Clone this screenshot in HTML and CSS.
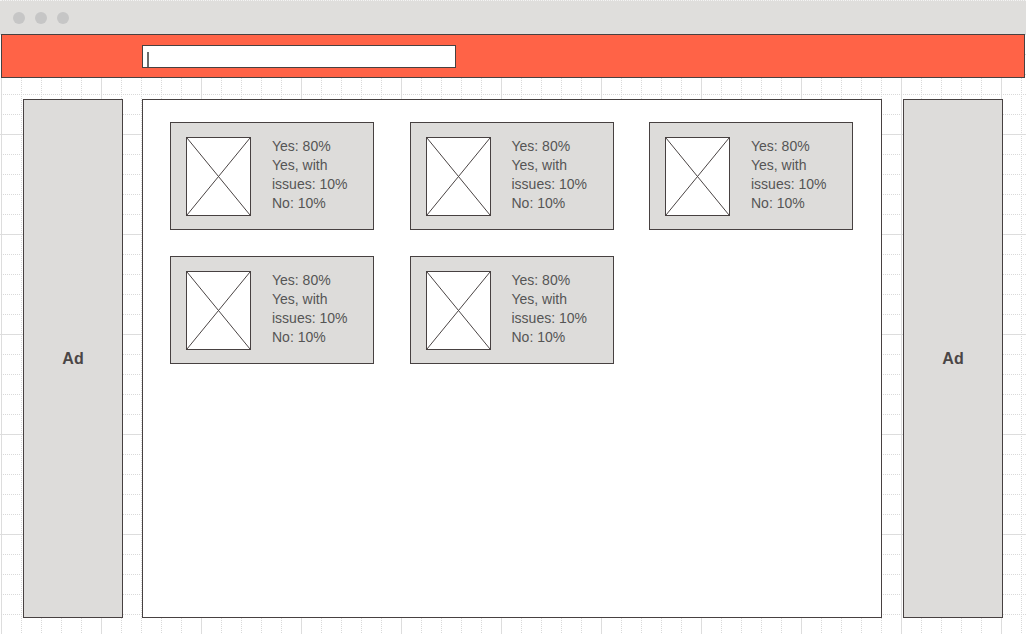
FILE: index.html
```html
<!DOCTYPE html>
<html>
<head>
<meta charset="utf-8">
<title>Poll results</title>
<link rel="stylesheet" href="styles.css">
</head>
<body>
<div class="titlebar">
  <span class="dot"></span><span class="dot"></span><span class="dot"></span>
</div>
<div class="navbar">
  <div class="search"><span class="caret"></span></div>
</div>
<div class="layout">
  <aside class="ad">Ad</aside>
  <main class="content">
    <div class="card">
      <div class="thumb"><svg viewBox="0 0 64 77" preserveAspectRatio="none"><path d="M0 0L64 77M64 0L0 77" stroke="#4a4444" stroke-width="1" fill="none" vector-effect="non-scaling-stroke"/></svg></div>
      <div class="stats"><div>Yes: 80%</div><div>Yes, with issues: 10%</div><div>No: 10%</div></div>
    </div>
    <div class="card">
      <div class="thumb"><svg viewBox="0 0 64 77" preserveAspectRatio="none"><path d="M0 0L64 77M64 0L0 77" stroke="#4a4444" stroke-width="1" fill="none" vector-effect="non-scaling-stroke"/></svg></div>
      <div class="stats"><div>Yes: 80%</div><div>Yes, with issues: 10%</div><div>No: 10%</div></div>
    </div>
    <div class="card">
      <div class="thumb"><svg viewBox="0 0 64 77" preserveAspectRatio="none"><path d="M0 0L64 77M64 0L0 77" stroke="#4a4444" stroke-width="1" fill="none" vector-effect="non-scaling-stroke"/></svg></div>
      <div class="stats"><div>Yes: 80%</div><div>Yes, with issues: 10%</div><div>No: 10%</div></div>
    </div>
    <div class="card">
      <div class="thumb"><svg viewBox="0 0 64 77" preserveAspectRatio="none"><path d="M0 0L64 77M64 0L0 77" stroke="#4a4444" stroke-width="1" fill="none" vector-effect="non-scaling-stroke"/></svg></div>
      <div class="stats"><div>Yes: 80%</div><div>Yes, with issues: 10%</div><div>No: 10%</div></div>
    </div>
    <div class="card">
      <div class="thumb"><svg viewBox="0 0 64 77" preserveAspectRatio="none"><path d="M0 0L64 77M64 0L0 77" stroke="#4a4444" stroke-width="1" fill="none" vector-effect="non-scaling-stroke"/></svg></div>
      <div class="stats"><div>Yes: 80%</div><div>Yes, with issues: 10%</div><div>No: 10%</div></div>
    </div>
  </main>
  <aside class="ad">Ad</aside>
</div>
</body>
</html>
```
FILE: styles.css
```css
html {
  background: #fff;
}
body {
  margin: 0;
  min-height: 634px;
  font-family: "Liberation Sans", Arial, sans-serif;
  background-color: #fff;
  background-image: url("data:image/svg+xml,%3Csvg xmlns='http://www.w3.org/2000/svg' width='100' height='100'%3E%3Cpath d='M0.5 0V100M0 0.5H100' stroke='%23dddddd'/%3E%3Cpath d='M20.5 0V100M40.5 0V100M60.5 0V100M80.5 0V100M0 20.5H100M0 40.5H100M0 60.5H100M0 80.5H100' stroke='%23d9d9d9' stroke-dasharray='1 1'/%3E%3C/svg%3E");
  background-position: 1px 34px;
}
.titlebar {
  height: 34px;
  box-sizing: border-box;
  background: #dfdedc;
  border-top: 1px dotted #f4f4f4;
  display: flex;
  align-items: center;
  gap: 10px;
  padding-left: 13px;
  padding-top: 1px;
}
.dot {
  width: 12px;
  height: 12px;
  border-radius: 50%;
  background: #c6c6c6;
}
.navbar {
  height: 44px;
  box-sizing: border-box;
  margin: 0 1px;
  background: #ff6347;
  border: 1px solid #474141;
  padding: 10px 0 0 140px;
}
.search {
  width: 314px;
  height: 23px;
  box-sizing: border-box;
  background: #fff;
  border: 1px solid #474141;
  padding: 6px 0 0 4px;
}
.caret {
  display: block;
  width: 2px;
  height: 15px;
  background: #6b6b6b;
}
.layout {
  display: flex;
  padding: 21px 0 0 23px;
}
.ad {
  width: 100px;
  height: 519px;
  box-sizing: border-box;
  background: #dddcda;
  border: 1px solid #474141;
  display: flex;
  align-items: center;
  justify-content: center;
  font-weight: bold;
  font-size: 16px;
  color: #4a4646;
}
.content {
  width: 740px;
  height: 519px;
  box-sizing: border-box;
  margin: 0 21px 0 19px;
  background: #fff;
  border: 1px solid #474141;
  padding: 22px 27px;
  display: flex;
  flex-wrap: wrap;
  align-content: flex-start;
  column-gap: 35.5px;
  row-gap: 26px;
}
.card {
  width: 204px;
  height: 108px;
  box-sizing: border-box;
  background: #dddcda;
  border: 1px solid #474141;
  padding: 14px 15px;
  display: flex;
  gap: 21px;
}
.thumb {
  width: 65px;
  height: 79px;
  box-sizing: border-box;
  flex: none;
  background: #fff;
  border: 1px solid #474141;
}
.thumb svg {
  display: block;
  width: 100%;
  height: 100%;
}
.stats {
  width: 88px;
  font-size: 14px;
  line-height: 19px;
  color: #555;
}
```
